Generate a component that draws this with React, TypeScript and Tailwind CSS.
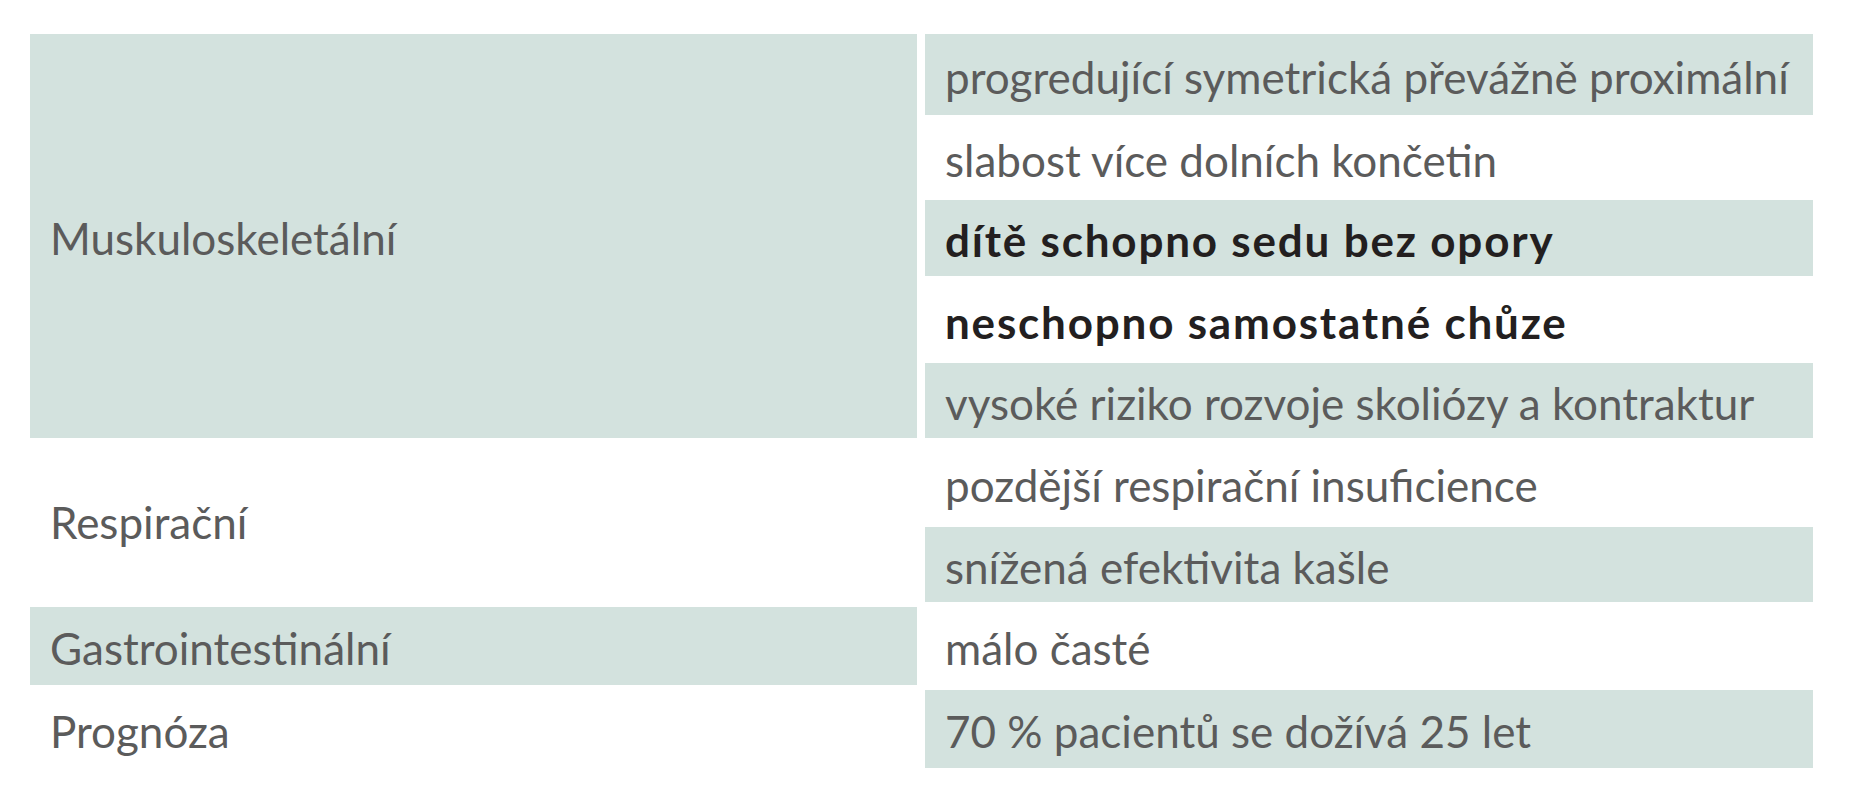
const rows: { text: string; bold?: boolean; shaded: boolean; h: string }[] = [
  { text: "progredující symetrická převážně proximální", shaded: true, h: "h-[81px]" },
  { text: "slabost více dolních končetin", shaded: false, h: "h-[85px]" },
  { text: "dítě schopno sedu bez opory", bold: true, shaded: true, h: "h-[76px]" },
  { text: "neschopno samostatné chůze", bold: true, shaded: false, h: "h-[87px]" },
  { text: "vysoké riziko rozvoje skoliózy a kontraktur", shaded: true, h: "h-[75px]" },
  { text: "pozdější respirační insuficience", shaded: false, h: "h-[89px]" },
  { text: "snížená efektivita kašle", shaded: true, h: "h-[75px]" },
  { text: "málo časté", shaded: false, h: "h-[88px]" },
  { text: "70 % pacientů se dožívá 25 let", shaded: true, h: "h-[78px]" },
];

function Cell({
  children,
  shaded,
  bold,
  className = "",
}: {
  children: React.ReactNode;
  shaded: boolean;
  bold?: boolean;
  className?: string;
}) {
  return (
    <div
      className={
        "flex items-center px-5 pt-1 " +
        (shaded ? "bg-[#d3e2de] " : "bg-white ") +
        (bold
          ? "font-bold tracking-[1.8px] text-[#231f20] "
          : "font-normal text-[#5b5b5b] ") +
        className
      }
    >
      {children}
    </div>
  );
}

export default function App() {
  return (
    <div className="h-[800px] w-full bg-white pl-[30px] pt-[34px] font-['Lato',sans-serif] text-[44px] leading-none">
      <div className="grid w-[1783px] grid-cols-[887px_888px] gap-x-2">
        {/* left column */}
        <div className="flex flex-col">
          <Cell shaded className="h-[404px]">Muskuloskeletální</Cell>
          <Cell shaded={false} className="h-[164px]">Respirační</Cell>
          <Cell shaded className="my-[5px] h-[78px]">Gastrointestinální</Cell>
          <Cell shaded={false} className="h-[78px]">Prognóza</Cell>
        </div>
        {/* right column */}
        <div className="flex flex-col">
          {rows.map((r) => (
            <Cell key={r.text} shaded={r.shaded} bold={r.bold} className={r.h}>
              {r.text}
            </Cell>
          ))}
        </div>
      </div>
    </div>
  );
}
